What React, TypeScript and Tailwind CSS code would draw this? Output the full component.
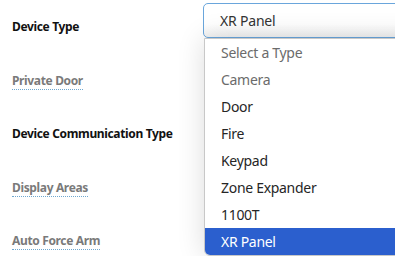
import React from "react";

const labels: { text: string; muted: boolean }[] = [
  { text: "Device Type", muted: false },
  { text: "Private Door", muted: true },
  { text: "Device Communication Type", muted: false },
  { text: "Display Areas", muted: true },
  { text: "Auto Force Arm", muted: true },
];

const options: { text: string; tone: "muted" | "normal" | "active" }[] = [
  { text: "Select a Type", tone: "muted" },
  { text: "Camera", tone: "muted" },
  { text: "Door", tone: "normal" },
  { text: "Fire", tone: "normal" },
  { text: "Keypad", tone: "normal" },
  { text: "Zone Expander", tone: "normal" },
  { text: "1100T", tone: "normal" },
  { text: "XR Panel", tone: "active" },
];

export default function App() {
  return (
    <div
      className="relative w-[395px] h-[256px] overflow-hidden bg-white"
      style={{ fontFamily: '"Noto Sans", "Open Sans", sans-serif' }}
    >
      <div className="flex">
        <div className="w-[203px] shrink-0 pl-[12px]">
          {labels.map((l) => (
            <div key={l.text} className="h-[53.5px] pt-[13px]">
              {l.muted ? (
                <span className="text-[12px] leading-[16px] font-bold text-[#7a7a7a] border-b border-dotted border-[#6fa8d0] tracking-[-0.35px]">
                  {l.text}
                </span>
              ) : (
                <span className="text-[12px] leading-[16px] font-bold text-[#111] tracking-[-0.35px]">
                  {l.text}
                </span>
              )}
            </div>
          ))}
        </div>
        <div className="flex-1 pt-[3px]">
          <div className="w-[230px] h-[35px] rounded-[5px] border border-[#6aa6dc] bg-gradient-to-b from-white from-60% to-[#f2f2f2] flex items-center pl-[16px]">
            <span className="text-[14px] text-[#333] tracking-[-0.2px]">XR Panel</span>
          </div>
        </div>
      </div>

      <div className="absolute left-[204px] top-[38px] w-[230px] bg-white border border-[#c8c8c8] rounded-bl-[6px] overflow-hidden shadow-[0_0_28px_rgba(0,0,0,0.14)]">
        {options.map((o) => (
          <div
            key={o.text}
            className={
              o.tone === "active"
                ? "h-[27px] flex items-center pl-[16px] bg-[#2b5fce] text-white text-[14px] tracking-[-0.3px]"
                : o.tone === "muted"
                ? "h-[27px] flex items-center pl-[16px] text-[#6b6b6b] text-[14px] tracking-[-0.3px]"
                : "h-[27px] flex items-center pl-[16px] text-[#262626] text-[14px] tracking-[-0.3px]"
            }
          >
            {o.text}
          </div>
        ))}
      </div>
    </div>
  );
}
